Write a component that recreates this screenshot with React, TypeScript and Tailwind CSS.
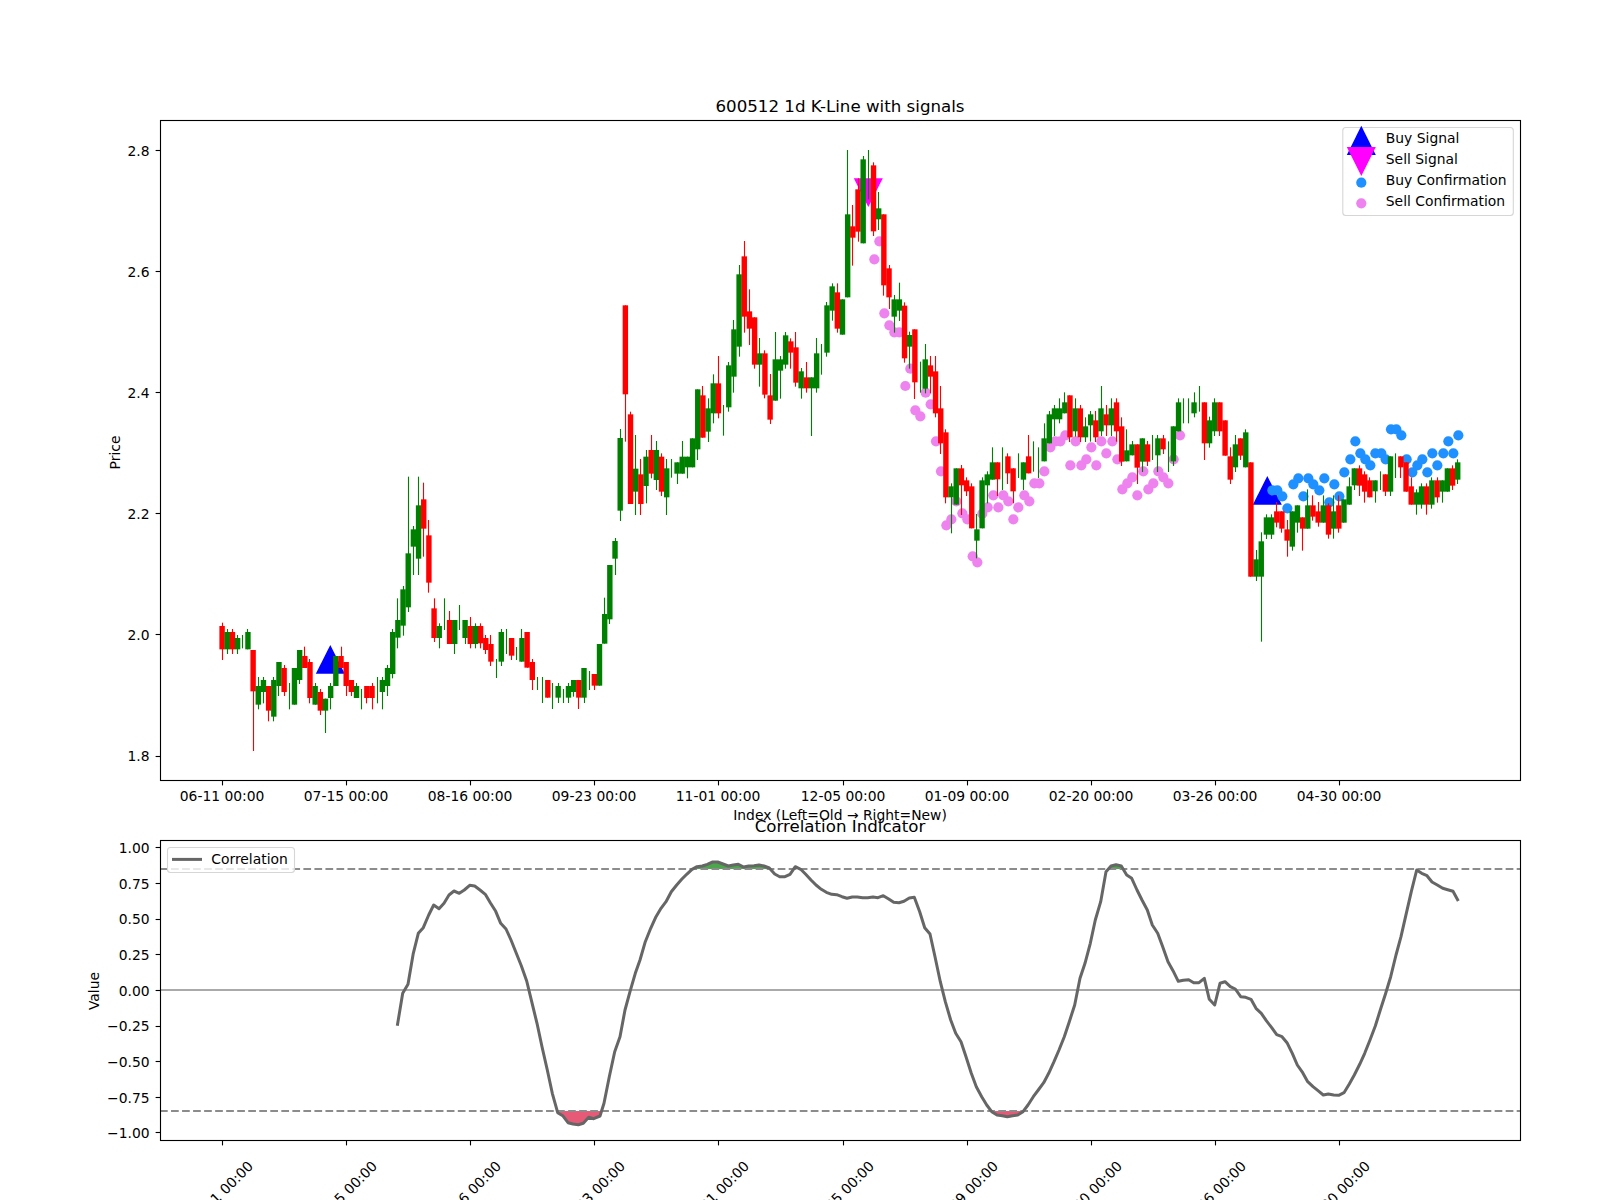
import React from "react";

type Row = number[];
// Rows: [isRed, wickTop, bodyTop, bodyBottom, wickBottom], or [isRed, wickTop, wickBottom] for a doji.
// Values are in 1/3 px measured from the base y of the segment.
const segments: { base: number; rows: Row[] }[] = [
  {
    base: 580,
    rows: [
      [1, 128, 138, 208, 240], [0, 147, 156, 208, 222], [1, 147, 156, 208, 222], [0, 165, 174, 208, 222],
      [0, 165, 205], [0, 147, 156, 208, 208], [1, 210, 210, 334, 513], [0, 291, 318, 374, 388],
      [0, 291, 300, 336, 370], [1, 318, 318, 392, 424], [0, 291, 300, 410, 424], [0, 246, 246, 318, 348],
      [1, 255, 264, 336, 348], [0, 309, 388], [0, 264, 264, 374, 374], [0, 210, 210, 300, 312],
      [1, 200, 228, 264, 264], [1, 237, 246, 354, 370], [0, 309, 318, 374, 374], [1, 327, 336, 392, 405],
      [0, 356, 356, 392, 459], [0, 309, 318, 354, 388], [0, 228, 228, 318, 318], [1, 200, 228, 264, 264],
      [1, 246, 246, 318, 348], [1, 300, 300, 336, 348], [0, 309, 318, 354, 354], [0, 327, 388],
      [1, 318, 318, 354, 370], [1, 309, 318, 354, 388], [0, 291, 370], [0, 291, 300, 336, 388],
      [0, 255, 264, 318, 348], [0, 147, 156, 282, 295],
    ],
  },
  {
    base: 460,
    rows: [
      [0, 415, 480, 533, 565], [0, 378, 388, 497, 527], [0, 50, 280, 442, 456], [0, 198, 208, 260, 345],
      [0, 50, 136, 296, 345], [1, 68, 118, 206, 290], [1, 180, 226, 368, 398],
    ],
  },
  {
    base: 580,
    rows: [
      [1, 55, 85, 174, 186], [0, 130, 138, 174, 205], [0, 55, 150], [1, 93, 120, 192, 192],
      [0, 120, 120, 192, 222], [0, 75, 150], [0, 120, 120, 174, 192], [1, 111, 138, 192, 205],
      [0, 130, 138, 192, 205],
    ],
  },
  {
    base: 480,
    rows: [
      [1, 430, 438, 490, 505], [1, 465, 474, 510, 522], [1, 465, 492, 545, 558], [0, 537, 594],
      [0, 447, 456, 545, 558], [0, 447, 522], [1, 474, 474, 527, 540], [0, 501, 540],
      [0, 447, 474, 545, 545], [1, 456, 456, 563, 563], [1, 537, 546, 600, 630], [0, 591, 630],
      [0, 591, 669], [1, 600, 600, 653, 653], [0, 609, 687], [0, 609, 618, 653, 669],
      [0, 627, 669], [0, 609, 618, 653, 669], [0, 600, 600, 636, 650], [1, 600, 600, 653, 687],
      [0, 564, 564, 653, 669], [0, 573, 630], [1, 582, 582, 617, 630], [0, 492, 492, 617, 617],
      [0, 353, 402, 491, 491], [0, 255, 255, 418, 432], [0, 174, 183, 236, 285], [0, -153, -126, 92, 123],
    ],
  },
  {
    base: 230,
    rows: [
      [1, 226, 226, 493, 635], [1, 545, 553, 822, 822], [0, 615, 716, 785, 855], [1, 687, 733, 822, 855],
      [0, 660, 680, 768, 820], [1, 615, 660, 731, 745], [0, 633, 660, 750, 780], [1, 670, 680, 785, 798],
      [0, 687, 715, 802, 855], [0, 687, 743], [0, 697, 697, 731, 762], [0, 633, 680, 731, 731],
      [0, 680, 680, 712, 745], [0, 625, 625, 712, 712], [0, 478, 478, 658, 690], [1, 468, 496, 623, 623],
      [0, 505, 535, 605, 636], [0, 433, 460, 550, 580], [1, 378, 460, 550, 565], [0, 525, 617],
      [0, 396, 406, 532, 545], [0, 270, 298, 440, 488], [0, 105, 133, 350, 380], [1, 33, 79, 260, 308],
      [1, 178, 244, 296, 345], [1, 262, 262, 404, 416], [0, 324, 370, 404, 470], [1, 361, 370, 494, 505],
      [1, 432, 496, 569, 582], [0, 306, 388, 512, 512], [0, 378, 388, 422, 506], [0, 306, 316, 404, 416],
      [1, 325, 334, 368, 416], [1, 306, 352, 458, 470], [0, 414, 424, 475, 506], [1, 396, 442, 475, 488],
      [0, 442, 442, 475, 618], [0, 324, 370, 475, 488], [0, 342, 434], [0, 216, 226, 368, 380],
      [0, 160, 169, 242, 272], [1, 160, 187, 296, 308], [0, 208, 208, 314, 314],
    ],
  },
  {
    base: 130,
    rows: [
      [0, 60, 253, 502, 502], [1, 225, 289, 323, 407], [1, 145, 178, 305, 335], [0, 78, 88, 340, 340],
      [0, 60, 208], [1, 97, 106, 304, 318], [0, 186, 235, 268, 300], [1, 253, 253, 466, 497],
      [1, 405, 415, 502, 537], [0, 495, 508, 560, 608], [0, 458, 508, 542, 573], [1, 517, 527, 685, 698],
      [0, 605, 615, 650, 716],
    ],
  },
  {
    base: 360,
    rows: [
      [1, -92, -92, 67, 117], [0, 5, 98], [0, -48, -2, 86, 100], [1, -12, 16, 50, 100],
      [1, -12, 34, 160, 172], [1, 78, 145, 250, 282], [1, 208, 217, 412, 430], [0, 370, 379, 412, 520],
      [0, 325, 325, 434, 434], [1, 315, 325, 376, 465], [1, 352, 361, 394, 408], [1, 370, 379, 505, 505],
      [0, 462, 508, 542, 595], [0, 352, 361, 505, 505], [0, 334, 343, 376, 430], [0, 262, 307, 359, 359],
      [1, 307, 307, 358, 408], [0, 262, 390], [1, 280, 289, 340, 372], [1, 325, 325, 394, 430],
      [0, 280, 354], [0, 307, 307, 359, 390], [1, 225, 289, 340, 340], [0, 244, 335],
      [0, 262, 354], [0, 190, 235, 304, 304], [0, 153, 163, 250, 250], [0, 135, 145, 178, 228],
      [0, 115, 145, 178, 190], [0, 97, 127, 160, 160], [1, 106, 106, 232, 246], [0, 115, 145, 214, 230],
      [1, 135, 145, 232, 246], [0, 172, 199, 232, 246], [0, 153, 163, 196, 245], [1, 153, 181, 232, 246],
      [0, 78, 145, 214, 228], [1, 135, 163, 196, 228], [0, 115, 145, 196, 228], [1, 115, 127, 214, 245],
      [1, 172, 199, 305, 318], [0, 208, 271, 304, 304], [0, 243, 253, 286, 286], [1, 253, 253, 323, 372],
      [0, 235, 235, 305, 336], [1, 243, 253, 305, 318], [0, 225, 300], [0, 225, 235, 286, 336],
      [1, 225, 235, 268, 282], [0, 244, 336], [0, 199, 199, 304, 318], [0, 115, 127, 214, 214],
      [0, 115, 190], [0, 115, 190], [0, 97, 127, 160, 172], [0, 78, 155],
    ],
  },
  {
    base: 370,
    rows: [
      [1, 97, 97, 220, 270], [0, 140, 151, 220, 233], [0, 85, 97, 184, 198], [1, 97, 97, 184, 198],
      [1, 151, 151, 257, 257], [1, 232, 259, 329, 342], [0, 195, 223, 292, 306], [1, 205, 205, 257, 270],
      [0, 178, 187, 292, 292], [1, 277, 277, 620, 620], [0, 540, 568, 620, 633], [0, 487, 514, 620, 815],
      [0, 433, 442, 494, 507], [0, 433, 442, 494, 507], [1, 396, 424, 458, 472], [1, 424, 424, 476, 488],
      [1, 450, 478, 512, 560], [0, 424, 424, 530, 542], [0, 406, 406, 458, 488], [1, 442, 442, 476, 542],
      [0, 358, 406, 476, 476], [1, 376, 406, 440, 452], [1, 396, 424, 458, 470], [0, 376, 406, 458, 458],
      [1, 400, 406, 494, 506], [0, 376, 424, 476, 506], [1, 376, 406, 476, 488], [0, 388, 388, 458, 458],
      [0, 322, 349, 404, 404], [0, 295, 295, 346, 360], [1, 286, 295, 347, 378], [1, 304, 313, 365, 398],
      [1, 322, 331, 382, 382], [0, 331, 331, 364, 398], [0, 304, 360], [1, 313, 313, 365, 378],
      [0, 259, 259, 365, 378], [0, 250, 324], [1, 259, 259, 292, 324], [1, 277, 277, 365, 365],
      [1, 322, 349, 404, 404], [0, 358, 367, 404, 434], [0, 340, 349, 404, 416], [1, 340, 349, 404, 434],
      [0, 322, 331, 404, 416], [1, 322, 331, 382, 398], [0, 331, 331, 365, 398], [0, 295, 295, 365, 365],
      [1, 286, 295, 347, 360], [0, 268, 277, 329, 342],
    ],
  },
];

const bars = segments.flatMap((s) =>
  s.rows.map((r) =>
    r.length === 3
      ? { red: !!r[0], wt: s.base + r[1] / 3, wb: s.base + r[2] / 3, bt: 0, bb: 0, doji: true }
      : { red: !!r[0], wt: s.base + r[1] / 3, bt: s.base + r[2] / 3, bb: s.base + r[3] / 3, wb: s.base + r[4] / 3, doji: false }
  )
);

const barX = (i: number) => 222.1 + 5.17 * i;
const pts = (ox: number, oy: number, a: number[][]) => a.map(([x, y]) => [ox + x / 3, oy + y / 3]);

const pink = [
  ...pts(600, 230, [[838, 34], [823, 88], [853, 250], [868, 286], [883, 307], [898, 307], [931, 416], [916, 468]]),
  ...pts(880, 360, [
    [106, 151], [121, 169], [137, 98], [152, 133], [168, 244], [183, 334], [199, 496], [214, 478], [229, 424],
    [247, 460], [262, 478], [278, 589], [292, 607], [307, 461], [323, 442], [340, 406], [355, 442], [370, 406],
    [385, 424], [400, 478], [415, 442], [433, 406], [448, 424], [463, 370], [478, 370], [493, 334], [511, 262],
    [526, 244], [541, 244], [556, 226], [571, 316], [587, 244], [604, 316], [619, 298], [634, 262], [649, 316],
    [664, 244], [679, 280], [697, 244], [712, 298], [727, 388], [742, 370], [757, 352], [772, 406], [790, 334],
    [805, 388], [820, 370], [835, 334], [850, 352], [865, 370], [881, 298], [900, 226],
  ]),
];

const blue = pts(1180, 370, [
  [277, 361], [292, 361], [307, 379], [322, 415], [340, 343], [355, 325], [370, 379], [385, 325], [400, 343],
  [418, 361], [433, 325], [448, 397], [463, 343], [478, 379], [493, 307], [511, 268], [526, 214], [541, 250],
  [556, 268], [571, 286], [586, 250], [604, 250], [617, 268], [633, 178], [649, 178], [664, 196], [680, 268],
  [697, 307], [712, 286], [727, 268], [742, 307], [757, 250], [772, 286], [790, 250], [805, 214], [820, 250],
  [835, 196],
]);

const corr = [
  ...pts(80, 780, [
    [952, 737], [968, 640], [984, 613], [1000, 520], [1015, 460], [1030, 443], [1046, 405], [1061, 375], [1077, 386],
    [1092, 370], [1107, 345], [1122, 333], [1138, 340], [1153, 330], [1169, 316], [1184, 318], [1200, 330], [1216, 343],
    [1231, 368], [1247, 394], [1262, 430], [1278, 447], [1293, 480], [1309, 520], [1324, 557], [1340, 603], [1355, 665],
    [1371, 730], [1386, 800], [1402, 870], [1417, 940], [1433, 998], [1448, 1007], [1464, 1028], [1479, 1032], [1495, 1034],
    [1510, 1030], [1526, 1012], [1541, 1016],
  ]),
  ...pts(600, 780, [
    [0, 1008], [12, 970], [28, 890], [44, 815], [60, 770], [75, 690], [90, 635], [106, 580], [120, 540], [136, 485],
    [152, 445], [168, 410], [183, 385], [198, 365], [214, 335], [230, 315], [245, 298], [260, 283], [276, 268], [291, 260],
    [307, 258], [322, 253], [338, 246], [353, 246], [369, 252], [385, 258], [400, 255], [415, 253], [431, 261], [446, 258],
    [462, 257], [477, 255], [492, 258], [508, 264], [524, 282], [539, 290], [555, 290], [570, 283], [586, 260], [602, 268],
    [617, 283], [633, 300], [648, 315], [664, 328], [679, 337], [695, 343], [710, 344], [726, 350], [741, 355], [757, 351],
    [772, 351], [788, 353], [803, 353], [819, 351], [834, 353], [850, 347], [866, 357], [881, 367], [897, 368], [912, 364],
    [928, 354], [943, 352], [959, 395], [974, 443], [990, 462], [1005, 530], [1021, 605], [1036, 665], [1052, 720], [1067, 760],
    [1083, 785], [1098, 830], [1114, 880], [1129, 920], [1145, 950], [1160, 975], [1175, 995], [1191, 1005], [1207, 1007],
    [1222, 1010], [1238, 1007], [1253, 1005], [1269, 995], [1284, 975], [1300, 950], [1315, 930], [1331, 908], [1346, 880],
    [1362, 845], [1377, 810], [1393, 770], [1408, 725], [1424, 675], [1440, 595], [1455, 550], [1471, 490], [1486, 420],
    [1502, 365],
  ]),
  ...pts(1100, 780, [
    [18, 275], [33, 258], [48, 254], [64, 258], [80, 285], [95, 295], [111, 330], [126, 360], [142, 390], [157, 435],
    [173, 460], [188, 500], [204, 545], [219, 572], [235, 604], [250, 601], [266, 599], [281, 608], [297, 608], [313, 595],
    [328, 658], [344, 675], [360, 610], [375, 605], [391, 620], [406, 627], [422, 650], [437, 652], [453, 658], [468, 685],
    [484, 700], [499, 722], [515, 743], [530, 764], [546, 770], [561, 788], [577, 820], [592, 855], [608, 878], [623, 905],
    [639, 920], [654, 932], [670, 945], [685, 942], [701, 945], [716, 946], [732, 938], [748, 912], [763, 885], [779, 853],
    [794, 820], [810, 780], [826, 738], [841, 690], [857, 640], [872, 590], [888, 525], [903, 470], [919, 400], [934, 335],
    [950, 270], [965, 280], [981, 287], [996, 306], [1012, 315], [1028, 325], [1043, 329], [1059, 334], [1075, 363],
  ]),
];

const corrStr = corr.map((p) => `${p[0].toFixed(1)},${p[1].toFixed(1)}`).join(" ");
const xFirst = corr[0][0].toFixed(1);
const xLast = corr[corr.length - 1][0].toFixed(1);

const dates = [
  "06-11 00:00", "07-15 00:00", "08-16 00:00", "09-23 00:00", "11-01 00:00",
  "12-05 00:00", "01-09 00:00", "02-20 00:00", "03-26 00:00", "04-30 00:00",
];
const tickX = [222.5, 346.5, 470.5, 594.5, 718.5, 843.5, 967.5, 1091.5, 1215.5, 1339.5];
const upperY = ["2.8", "2.6", "2.4", "2.2", "2.0", "1.8"].map((t, k) => ({ t, y: 150.3 + 121.14 * k }));
const lowerY = ["1.00", "0.75", "0.50", "0.25", "0.00", "−0.25", "−0.50", "−0.75", "−1.00"].map((t, k) => ({
  t,
  y: 847.7 + 35.66 * k,
}));

const tri = (cx: number, top: number, bottom: number, hw: number, up: boolean) =>
  up
    ? `${cx},${top} ${cx - hw},${bottom} ${cx + hw},${bottom}`
    : `${cx - hw},${top} ${cx + hw},${top} ${cx},${bottom}`;

export default function App() {
  return (
    <div className="w-[1600px] h-[1200px] bg-white overflow-hidden">
      <svg
        width={1600}
        height={1200}
        viewBox="0 0 1600 1200"
        className="block font-['DejaVu_Sans',sans-serif] text-[13.89px]"
      >
        <defs>
          <clipPath id="above">
            <rect x={160} y={840} width={1360} height={29} />
          </clipPath>
          <clipPath id="below">
            <rect x={160} y={1111} width={1360} height={29} />
          </clipPath>
        </defs>

        <text x={840} y={112} textAnchor="middle" className="text-[16.67px]">
          600512 1d K-Line with signals
        </text>

        {/* price panel contents */}
        <polygon points={tri(330.3, 645, 673.7, 14.5, true)} fill="#0000ff" />
        <polygon points={tri(1267.3, 476, 504.7, 14.5, true)} fill="#0000ff" />
        <polygon points={tri(868.3, 178.3, 207, 14.5, false)} fill="#ff00ff" />
        {pink.map((p, i) => (
          <circle key={i} cx={p[0]} cy={p[1]} r={5.1} fill="#ee82ee" />
        ))}
        {blue.map((p, i) => (
          <circle key={i} cx={p[0]} cy={p[1]} r={5.1} fill="#1e90ff" />
        ))}
        {bars.map((b, i) =>
          b.doji ? null : (
            <rect
              key={i}
              x={barX(i) - 2.7}
              y={b.bt}
              width={5.4}
              height={b.bb - b.bt}
              fill={b.red ? "#ff0000" : "#008000"}
            />
          )
        )}
        {bars.map((b, i) => {
          const x = Math.floor(barX(i)) + 0.5;
          return (
            <line key={i} x1={x} x2={x} y1={b.wt} y2={b.wb} stroke={b.red ? "#ff0000" : "#008000"} strokeWidth={1.11} />
          );
        })}

        {/* price panel frame */}
        <rect x={160.5} y={120.5} width={1360} height={660} fill="none" stroke="#000" strokeWidth={1.11} />
        {tickX.map((x, k) => (
          <g key={k}>
            <line x1={x} x2={x} y1={781} y2={785.4} stroke="#000" strokeWidth={1.11} />
            <text x={x - 0.4} y={801} textAnchor="middle">
              {dates[k]}
            </text>
          </g>
        ))}
        {upperY.map(({ t, y }) => (
          <g key={t}>
            <line x1={155.6} x2={160} y1={Math.floor(y) + 0.5} y2={Math.floor(y) + 0.5} stroke="#000" strokeWidth={1.11} />
            <text x={149.6} y={y + 5.3} textAnchor="end">
              {t}
            </text>
          </g>
        ))}
        <text transform="translate(120 452.5) rotate(-90)" textAnchor="middle">
          Price
        </text>
        <text x={840} y={820} textAnchor="middle">
          Index (Left=Old → Right=New)
        </text>

        {/* legend of the price panel */}
        <rect x={1342.8} y={127.5} width={170.5} height={88} rx={3} fill="#fff" fillOpacity={0.8} stroke="#d6d6d6" strokeWidth={1.11} />
        <polygon points={tri(1361.3, 125.7, 155, 14.5, true)} fill="#0000ff" />
        <polygon points={tri(1361.3, 147, 176, 14.5, false)} fill="#ff00ff" />
        <circle cx={1361.3} cy={182.7} r={5.1} fill="#1e90ff" />
        <circle cx={1361.3} cy={203.3} r={5.1} fill="#ee82ee" />
        <text x={1385.8} y={142.7}>Buy Signal</text>
        <text x={1385.8} y={163.7}>Sell Signal</text>
        <text x={1385.8} y={184.7}>Buy Confirmation</text>
        <text x={1385.8} y={205.7}>Sell Confirmation</text>

        {/* correlation panel */}
        <text x={840} y={831.7} textAnchor="middle" className="text-[16.67px]">
          Correlation Indicator
        </text>
        <polygon clipPath="url(#above)" points={`${corrStr} ${xLast},869 ${xFirst},869`} fill="#4ca64c" />
        <polygon clipPath="url(#below)" points={`${corrStr} ${xLast},1111 ${xFirst},1111`} fill="#e65a77" />
        <line x1={160} x2={1520} y1={869} y2={869} stroke="#8c8c8c" strokeWidth={2.08} strokeDasharray="7.7 3.33" />
        <line x1={160} x2={1520} y1={1111} y2={1111} stroke="#8c8c8c" strokeWidth={2.08} strokeDasharray="7.7 3.33" />
        <line x1={160} x2={1520} y1={990} y2={990} stroke="#aaaaaa" strokeWidth={2.08} />
        <polyline points={corrStr} fill="none" stroke="#666666" strokeWidth={3} strokeLinejoin="round" />

        <rect x={160.5} y={840.5} width={1360} height={300} fill="none" stroke="#000" strokeWidth={1.11} />
        {tickX.map((x, k) => (
          <g key={k}>
            <line x1={x} x2={x} y1={1141} y2={1145.4} stroke="#000" strokeWidth={1.11} />
            <text transform={`translate(${x - 2} 1193.5) rotate(-45)`} y={5} textAnchor="middle">
              {dates[k]}
            </text>
          </g>
        ))}
        {lowerY.map(({ t, y }) => (
          <g key={t}>
            <line x1={155.6} x2={160} y1={Math.floor(y) + 0.5} y2={Math.floor(y) + 0.5} stroke="#000" strokeWidth={1.11} />
            <text x={149.6} y={y + 5.3} textAnchor="end">
              {t}
            </text>
          </g>
        ))}
        <text transform="translate(98.5 991) rotate(-90)" textAnchor="middle">
          Value
        </text>

        {/* legend of the correlation panel */}
        <rect x={167.5} y={847.5} width={127} height={25} rx={3} fill="#fff" fillOpacity={0.8} stroke="#d6d6d6" strokeWidth={1.11} />
        <line x1={172} x2={202} y1={859.4} y2={859.4} stroke="#666666" strokeWidth={3} />
        <text x={211.3} y={864}>Correlation</text>
      </svg>
    </div>
  );
}
